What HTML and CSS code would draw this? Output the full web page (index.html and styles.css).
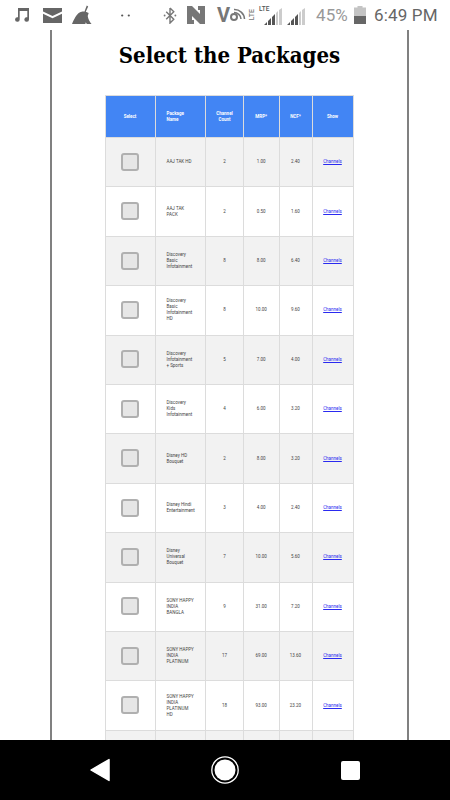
FILE: index.html
```html
<!DOCTYPE html>
<html lang="en">
<head>
<meta charset="utf-8">
<title>Select the Packages</title>
<link rel="stylesheet" href="styles.css">
</head>
<body>
<div class="screen">
  <header class="status">
    <svg class="ic music" viewBox="0 0 15 16"><path d="M3 1h11v11.500a2.300 2.300 0 1 1-1.700-2.200V4H4.700v8.500A2.300 2.300 0 1 1 3 10.300z" fill="#666"/></svg>
    <svg class="ic mail" viewBox="0 0 19 15"><path d="M0 0h19v3.500L9.500 8 0 3.500zM0 5.800l9.500 4.500L19 5.800V15H0z" fill="#666"/></svg>
    <svg class="ic broom" viewBox="0 0 21 20"><path d="M15.500 0L17 1l-2.500 5.500 3 1.500-1 3c.5 3 2 6 4 8.500h-5l-1-2-.5 2H0C2 15 4.500 9.500 8 7.500c2-1 3.500-1.200 5-1z" fill="#666"/></svg>
    <svg class="ic dots" viewBox="0 0 9 3"><circle cx="1.200" cy="1.500" r="1.100" fill="#555"/><circle cx="7.800" cy="1.500" r="1.100" fill="#555"/></svg>
    <svg class="ic bt" viewBox="0 0 14 18"><path d="M7 1v16l4-4-8-8M7 1l4 4-8 8" fill="none" stroke="#777" stroke-width="1.500"/><circle cx="1.300" cy="9" r="1" fill="#777"/><circle cx="12.700" cy="9" r="1" fill="#777"/></svg>
    <svg class="ic nfc" viewBox="0 0 20 20"><path d="M1 1h5l8 8V5h-2V1h7v18h-5L6 11v4h2v4H1z" fill="#777"/></svg>
    <span class="volte">V</span>
    <svg class="ic wifi" viewBox="0 0 17 16"><circle cx="5" cy="10" r="3" fill="none" stroke="#777" stroke-width="2"/><path d="M5 2.500A10 10 0 0 1 15.500 12M5 5.500A7 7 0 0 1 12 12" fill="none" stroke="#777" stroke-width="1.500"/></svg>
    <span class="lte-v">LTE</span>
    <span class="sig-wrap">
      <span class="lte-h">LTE</span>
      <svg class="ic sig" viewBox="0 0 18 17"><path d="M0 17l3-3v3zM4 17v-4l3-3v7zM8 17V9l3-3v11z" fill="#555"/><path d="M12 17V5l2-2v14zM15 17V2l3-2v17z" fill="#ccc"/></svg>
    </span>
    <svg class="ic sig sig2" viewBox="0 0 18 17"><path d="M0 17l3-3v3zM4 17v-4l3-3v7zM8 17V9l3-3v11z" fill="#555"/><path d="M12 17V5l2-2v14zM15 17V2l3-2v17z" fill="#ccc"/></svg>
    <span class="pct">45%</span>
    <svg class="ic batt" viewBox="0 0 12 18"><path d="M3.500 0h5v1.500H12V18H0V1.500h3.500z" fill="#c4c4c4"/><rect y="10" width="12" height="8" fill="#666"/></svg>
    <span class="time">6:49 PM</span>
  </header>

  <main class="frame">
    <h1 class="title">Select the Packages</h1>
    <table class="packages">
      <colgroup>
        <col class="c1"><col class="c2"><col class="c3"><col class="c4"><col class="c5"><col class="c6">
      </colgroup>
      <thead>
        <tr><th>Select</th><th class="left">Package<br>Name</th><th>Channel<br>Count</th><th>MRP*</th><th>NCF*</th><th>Show</th></tr>
      </thead>
      <tbody>
        <tr><td><span class="check"></span></td><td class="left">AAJ TAK HD</td><td>2</td><td>1.00</td><td>2.40</td><td><a href="#">Channels</a></td></tr>
        <tr><td><span class="check"></span></td><td class="left">AAJ TAK<br>PACK</td><td>2</td><td>0.50</td><td>1.60</td><td><a href="#">Channels</a></td></tr>
        <tr><td><span class="check"></span></td><td class="left">Discovery<br>Basic<br>Infotainment</td><td>8</td><td>8.00</td><td>6.40</td><td><a href="#">Channels</a></td></tr>
        <tr><td><span class="check"></span></td><td class="left">Discovery<br>Basic<br>Infotainment<br>HD</td><td>8</td><td>10.00</td><td>9.60</td><td><a href="#">Channels</a></td></tr>
        <tr><td><span class="check"></span></td><td class="left">Discovery<br>Infotainment<br>+ Sports</td><td>5</td><td>7.00</td><td>4.00</td><td><a href="#">Channels</a></td></tr>
        <tr><td><span class="check"></span></td><td class="left">Discovery<br>Kids<br>Infotainment</td><td>4</td><td>6.00</td><td>3.20</td><td><a href="#">Channels</a></td></tr>
        <tr><td><span class="check"></span></td><td class="left">Disney HD<br>Bouquet</td><td>2</td><td>8.00</td><td>3.20</td><td><a href="#">Channels</a></td></tr>
        <tr><td><span class="check"></span></td><td class="left">Disney Hindi<br>Entertainment</td><td>3</td><td>4.00</td><td>2.40</td><td><a href="#">Channels</a></td></tr>
        <tr><td><span class="check"></span></td><td class="left">Disney<br>Universal<br>Bouquet</td><td>7</td><td>10.00</td><td>5.60</td><td><a href="#">Channels</a></td></tr>
        <tr><td><span class="check"></span></td><td class="left">SONY HAPPY<br>INDIA<br>BANGLA</td><td>9</td><td>31.00</td><td>7.20</td><td><a href="#">Channels</a></td></tr>
        <tr><td><span class="check"></span></td><td class="left">SONY HAPPY<br>INDIA<br>PLATINUM</td><td>17</td><td>69.00</td><td>13.60</td><td><a href="#">Channels</a></td></tr>
        <tr><td><span class="check"></span></td><td class="left">SONY HAPPY<br>INDIA<br>PLATINUM<br>HD</td><td>18</td><td>93.00</td><td>23.20</td><td><a href="#">Channels</a></td></tr>
        <tr><td><span class="check"></span></td><td class="left"></td><td></td><td></td><td></td><td></td></tr>
      </tbody>
    </table>
  </main>

  <nav class="navbar">
    <svg class="nav-back" viewBox="0 0 21 24"><path d="M20 1v22L1 12z" fill="#fff" stroke="#fff" stroke-width="1.500" stroke-linejoin="round"/></svg>
    <svg class="nav-home" viewBox="0 0 28 28"><circle cx="14" cy="14" r="13.200" fill="none" stroke="#fff" stroke-width="1.300"/><circle cx="14" cy="14" r="10.500" fill="#fff"/></svg>
    <span class="nav-recent"></span>
  </nav>
</div>
</body>
</html>
```
FILE: styles.css
```css
* { box-sizing: border-box; }
html, body { margin: 0; padding: 0; background: #fff; }
body { font-family: Roboto, "Liberation Sans", sans-serif; }

.screen {
  width: 450px;
  height: 800px;
  display: flex;
  flex-direction: column;
  overflow: hidden;
}

/* status bar */
.status {
  flex: 0 0 30px;
  display: flex;
  align-items: center;
  padding: 0 0 0 15px;
  color: #666;
  background: #fff;
}
.ic { display: block; flex: none; }
.music { width: 15px; height: 16px; }
.mail { width: 19px; height: 15px; margin-left: 13px; }
.broom { width: 20px; height: 20px; margin-left: 10px; }
.dots { width: 9px; height: 3px; margin-left: 29px; }
.bt { width: 14px; height: 17px; margin-left: 33px; }
.nfc { width: 20px; height: 20px; margin-left: 9px; }
.volte { font-size: 20px; font-weight: 700; color: #777; margin-left: 11px; width: 13px; }
.wifi { width: 17px; height: 16px; margin-left: -1px; }
.lte-v {
  font-size: 7px;
  font-weight: 500;
  color: #777;
  writing-mode: vertical-rl;
  transform: rotate(180deg);
  margin-left: 2px;
  width: 7px;
}
.sig-wrap { position: relative; display: block; margin-left: 9px; margin-top: 2px; }
.sig { width: 18px; height: 17px; }
.lte-h {
  position: absolute;
  left: -5px;
  top: -3px;
  font-size: 6.500px;
  font-weight: 500;
  color: #555;
}
.sig2 { margin-left: 5px; margin-top: 2px; }
.pct { font-size: 17px; color: #999; margin-left: 11px; letter-spacing: 0.1px; }
.batt { width: 12px; height: 18px; margin-left: 6px; }
.time { font-size: 17px; color: #666; margin-left: 8px; letter-spacing: 0.2px; white-space: nowrap; }

/* page */
.frame {
  flex: 1 1 auto;
  min-height: 0;
  margin: 0 41px 0 50px;
  border-left: 2px solid #808080;
  border-right: 2px solid #808080;
  overflow: hidden;
}
.title {
  margin: 0;
  padding-top: 9px;
  height: 65px;
  font-family: "DejaVu Serif Condensed", "DejaVu Serif", serif;
  font-size: 22px;
  line-height: 32px;
  font-weight: 700;
  text-align: center;
  color: #000;
}

.packages {
  border-collapse: collapse;
  table-layout: fixed;
  width: 248px;
  margin-left: 52.500px;
  font-size: 4.500px;
  line-height: 6px;
  color: #444;
}
.c1 { width: 50px; }
.c2 { width: 50.500px; }
.c3 { width: 38px; }
.c4 { width: 35.500px; }
.c5 { width: 33px; }
.c6 { width: 41px; }
.packages th, .packages td {
  border: 1.200px solid #dcdcdc;
  text-align: center;
  vertical-align: middle;
  padding: 0;
}
.packages th {
  height: 42px;
  background: #4285f4;
  color: #fff;
  font-weight: 700;
}
.packages td { height: 49.420px; }
.packages .left { text-align: left; padding-left: 11px; }
.packages tbody tr:nth-child(odd) td { background: #f2f2f2; }
.packages a { color: #2a2af0; text-decoration: underline; }

.check {
  display: block;
  width: 18px;
  height: 18px;
  margin: -1px auto 0;
  background: #e6e6e6;
  border: 2px solid #b0b0b0;
  border-radius: 3px;
}

/* navigation bar */
.navbar {
  flex: 0 0 60px;
  background: #000;
  display: grid;
  grid-template-columns: 20px 28px 20px;
  justify-content: space-between;
  align-items: center;
  padding: 0 90px;
}
.nav-back { width: 20px; height: 24px; display: block; }
.nav-home { width: 28px; height: 28px; display: block; }
.nav-recent { width: 19px; height: 19px; background: #fff; border-radius: 2px; display: block; justify-self: end; }
```
